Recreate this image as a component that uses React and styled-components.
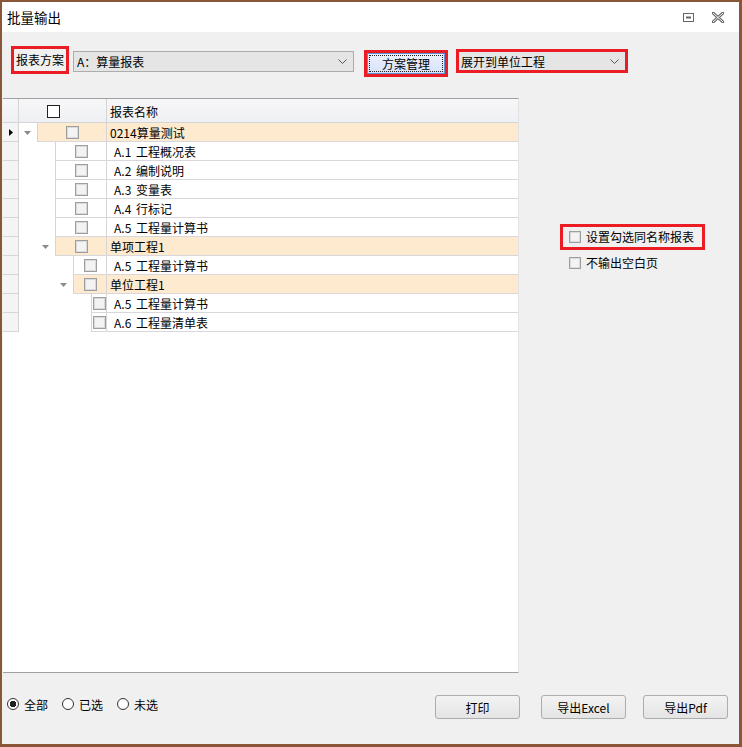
import styled, { createGlobalStyle } from "styled-components";

const GlobalStyle = createGlobalStyle`
  * { box-sizing: border-box; }
  body {
    margin: 0;
    font-family: "Noto Sans CJK SC", "Noto Sans", sans-serif;
    font-size: 12px;
    color: #000;
  }
`

const Window = styled.div`
  width: 742px;
  height: 747px;
  border-style: solid;
  border-color: #8b5637;
  border-width: 2px 3px 3px 2px;
  background: #f0f0f0;
  display: flex;
  flex-direction: column;
`

const TitleBar = styled.div`
  height: 30px;
  background: #fff;
  display: flex;
  align-items: center;
  padding: 0 6px 0 5px;
`

const Title = styled.div`
  flex: 1;
  font-size: 13.5px;
  line-height: 30px;
`

const TitleButton = styled.div`
  width: 30px;
  height: 30px;
  display: flex;
  align-items: center;
  justify-content: center;
`

const Toolbar = styled.div`
  height: 66px;
  display: flex;
  align-items: flex-start;
  padding: 14px 0 0 9px;
`

const RedBox = styled.div`
  border: 3px solid #ec1c24;
  margin-top: ${p => p.$top || 0}px;
  margin-left: ${p => p.$left || 0}px;
  width: ${p => p.$w ? p.$w + "px" : "auto"};
  height: ${p => p.$h}px;
  display: flex;
  align-items: center;
`

const Label = styled.span`
  padding: 0 2px;
  line-height: 22px;
`

const Combo = styled.div`
  margin-top: ${p => p.$top || 0}px;
  margin-left: ${p => p.$left || 0}px;
  width: ${p => p.$w}px;
  height: ${p => p.$h}px;
  background: #e5e5e5;
  border: ${p => p.$plain ? "none" : "1px solid #acacac"};
  display: flex;
  align-items: center;
  justify-content: space-between;
  padding: 0 6px 0 ${p => p.$pad}px;
  flex: ${p => p.$plain ? 1 : "none"};
  align-self: stretch;
`

const FocusButton = styled.div`
  flex: 1;
  align-self: stretch;
  border: 1px solid #5d8fd6;
  background: linear-gradient(#ebf1fe, #d7e2fb);
  padding: 1px;
  display: flex;
`

const FocusRect = styled.div`
  flex: 1;
  border: 1px dotted #222;
  display: flex;
  align-items: center;
  justify-content: center;
  line-height: 16px;
  padding-top: 1px;
`

const Main = styled.div`
  height: 575px;
  display: flex;
`

const Grid = styled.div`
  margin-left: 1px;
  width: 516px;
  border-top: 1px solid #a0a0a0;
  border-bottom: 1px solid #a0a0a0;
  border-right: 1px solid #e2e2e2;
  background: #fff;
  display: flex;
  flex-direction: column;
`

const HeadRow = styled.div`
  height: 24px;
  display: flex;
  background: linear-gradient(#f7f7f9, #eff0f3);
  border-bottom: 1px solid #d5d5d5;
`

const HeadCell = styled.div`
  width: ${p => p.$w ? p.$w + "px" : "auto"};
  flex: ${p => p.$w ? "none" : 1};
  border-right: ${p => p.$w ? "1px solid #d5d5d5" : "none"};
  display: flex;
  align-items: center;
  padding-left: ${p => p.$pad || 0}px;
  padding-top: 1px;
`

const Row = styled.div`
  height: 19px;
  display: flex;
`

const RowHead = styled.div`
  width: 16px;
  background: #f4f4f4;
  border-right: 1px solid #d5d5d5;
  border-bottom: 1px solid #d5d5d5;
  display: flex;
  align-items: center;
  justify-content: center;
`

const Indent = styled.div`
  width: ${p => p.$w}px;
  display: flex;
  justify-content: flex-end;
`

const ArrowSlot = styled.div`
  width: 18px;
  display: flex;
  align-items: center;
  padding-left: 5px;
`

const RowBody = styled.div`
  flex: 1;
  display: flex;
  background: ${p => p.$group ? "#fdeacf" : "#fff"};
  border-left: 1px solid #d5d5d5;
  border-bottom: 1px solid #d8d8dc;
`

const CheckCell = styled.div`
  width: ${p => p.$w}px;
  border-right: 1px solid #d5d5d5;
  display: flex;
  align-items: center;
  justify-content: center;
`

const NameCell = styled.div`
  flex: 1;
  padding-left: ${p => p.$pad}px;
  padding-top: 1px;
  line-height: 18px;
  white-space: nowrap;
  word-spacing: 2px;
`

const Check = styled.span`
  display: inline-block;
  width: ${p => p.$size || 13}px;
  height: ${p => p.$size || 13}px;
  border: 1px solid ${p => p.$dark ? "#222" : "#9e9e9e"};
  background: ${p => p.$dark ? "#fff" : "#f3f3f3"};
  box-shadow: ${p => p.$dark ? "none" : "inset 0 0 0 1px #dadada"};
`

const Side = styled.div`
  margin-left: 41px;
  padding-top: 126px;
  display: flex;
  flex-direction: column;
`

const Option = styled.label`
  display: flex;
  align-items: center;
  gap: 5px;
  padding: 0 8px 0 ${p => p.$pad}px;
  height: ${p => p.$h}px;
  line-height: 16px;
`

const Footer = styled.div`
  flex: 1;
  display: flex;
  align-items: flex-start;
  padding: 22px 11px 0 5px;
`

const Radios = styled.div`
  height: 18px;
  display: flex;
  align-items: center;
  gap: 14px;
`

const Radio = styled.span`
  display: flex;
  align-items: center;
  gap: 5px;
  &::before {
    content: "";
    width: 12px;
    height: 12px;
    border-radius: 50%;
    border: 1px solid #333;
    box-sizing: border-box;
    background: ${p => p.$on ? "radial-gradient(circle, #222 0 3px, #fff 3.5px)" : "#fff"};
  }
`

const Buttons = styled.div`
  margin-left: auto;
  display: flex;
`

const Button = styled.button`
  width: 85px;
  height: 24px;
  border: 1px solid #adadad;
  border-radius: 3px;
  background: linear-gradient(#f3f3f3, #e4e4e4);
  font: inherit;
  font-size: 12px;
  color: #000;
  padding: 0;
  margin-left: ${p => p.$left || 0}px;
`

const Chevron = () => (
  <svg width="9" height="5" viewBox="0 0 9 5">
    <path d="M0.5 0.5 L4.5 4.5 L8.5 0.5" fill="none" stroke="#555" strokeWidth="1" />
  </svg>
)

const Expander = () => (
  <svg width="7" height="4" viewBox="0 0 7 4">
    <path d="M0 0 H7 L3.5 4 Z" fill="#8a8a8a" />
  </svg>
)

const Current = () => (
  <svg width="4" height="7" viewBox="0 0 4 7">
    <path d="M0 0 L4 3.5 L0 7 Z" fill="#000" />
  </svg>
)

const rows = [
  { level: 0, name: "0214算量测试", group: true, current: true },
  { level: 1, name: "A.1 工程概况表" },
  { level: 1, name: "A.2 编制说明" },
  { level: 1, name: "A.3 变量表" },
  { level: 1, name: "A.4 行标记" },
  { level: 1, name: "A.5 工程量计算书" },
  { level: 1, name: "单项工程1", group: true },
  { level: 2, name: "A.5 工程量计算书" },
  { level: 2, name: "单位工程1", group: true },
  { level: 3, name: "A.5 工程量计算书" },
  { level: 3, name: "A.6 工程量清单表" },
]

function App() {
  return (
    <>
      <GlobalStyle />
      <Window>
        <TitleBar>
          <Title>批量输出</Title>
          <TitleButton>
            <svg width="11" height="9" viewBox="0 0 11 9">
              <rect x="0.5" y="0.5" width="10" height="8" fill="none" stroke="#666" />
              <rect x="3" y="3.5" width="5" height="2" fill="#666" />
            </svg>
          </TitleButton>
          <TitleButton>
            <svg width="12" height="11" viewBox="0 0 12 11">
              <path d="M1 1 L11 10 M11 1 L1 10" stroke="#666" strokeWidth="3" strokeLinecap="square" />
              <path d="M1 1 L11 10 M11 1 L1 10" stroke="#fff" strokeWidth="1" />
            </svg>
          </TitleButton>
        </TitleBar>

        <Toolbar>
          <RedBox $w={58} $h={28}>
            <Label>报表方案</Label>
          </RedBox>
          <Combo $top={5} $left={4} $w={281} $h={21} $pad={3}>
            <span>A：算量报表</span>
            <Chevron />
          </Combo>
          <RedBox $top={4} $left={10} $w={84} $h={27}>
            <FocusButton>
              <FocusRect>方案管理</FocusRect>
            </FocusButton>
          </RedBox>
          <RedBox $top={3} $left={8} $w={172} $h={24}>
            <Combo $plain $pad={2}>
              <span>展开到单位工程</span>
              <Chevron />
            </Combo>
          </RedBox>
        </Toolbar>

        <Main>
          <Grid>
            <HeadRow>
              <HeadCell $w={16} />
              <HeadCell $w={88} $pad={28}>
                <Check $dark />
              </HeadCell>
              <HeadCell $pad={3}>报表名称</HeadCell>
            </HeadRow>
            {rows.map((r, i) => (
              <Row key={i}>
                <RowHead>{r.current && <Current />}</RowHead>
                <Indent $w={18 * (r.level + 1)}>
                  {r.group && (
                    <ArrowSlot>
                      <Expander />
                    </ArrowSlot>
                  )}
                </Indent>
                <RowBody $group={r.group}>
                  <CheckCell $w={69 - 18 * r.level}>
                    <Check />
                  </CheckCell>
                  <NameCell $pad={r.group ? 3 : 7}>{r.name}</NameCell>
                </RowBody>
              </Row>
            ))}
          </Grid>

          <Side>
            <RedBox $h={26}>
              <Option $pad={6} $h={20}>
                <Check $size={12} />
                设置勾选同名称报表
              </Option>
            </RedBox>
            <Option $pad={9} $h={26}>
              <Check $size={12} />
              不输出空白页
            </Option>
          </Side>
        </Main>

        <Footer>
          <Radios>
            <Radio $on>全部</Radio>
            <Radio>已选</Radio>
            <Radio>未选</Radio>
          </Radios>
          <Buttons>
            <Button>打印</Button>
            <Button $left={21}>导出Excel</Button>
            <Button $left={17}>导出Pdf</Button>
          </Buttons>
        </Footer>
      </Window>
    </>
  )
}

export default App;
